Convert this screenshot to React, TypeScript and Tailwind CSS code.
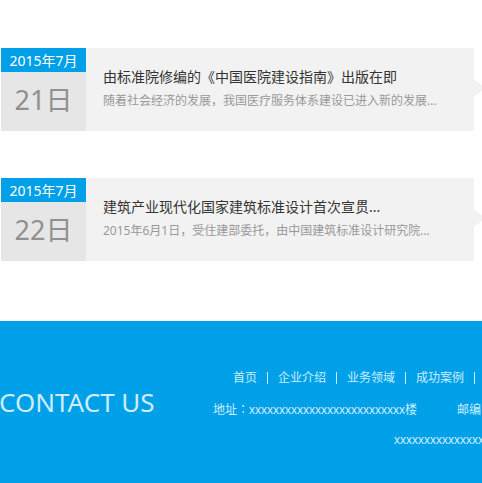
const sans = "font-['Noto_Sans','Noto_Sans_CJK_SC',sans-serif]";
const latin = "font-['Liberation_Sans','Noto_Sans_CJK_SC',sans-serif]";
const centredColon = "font-['Noto_Sans_CJK_JP',sans-serif]";

const news = [
  { month: '2015年7月', day: '21日', title: '由标准院修编的《中国医院建设指南》出版在即', text: '随着社会经济的发展，我国医疗服务体系建设已进入新的发展...' },
  { month: '2015年7月', day: '22日', title: '建筑产业现代化国家建筑标准设计首次宣贯...', text: '2015年6月1日，受住建部委托，由中国建筑标准设计研究院...' },
];

const links = ['首页', '企业介绍', '业务领域', '成功案例'];

export default function App() {
  return (
    <div className={`overflow-hidden bg-white ${sans}`}>
      <main className="flex flex-col gap-[47px] pt-12 pb-15 pl-px">
        {news.map((item) => (
          <article key={item.day} className="flex items-stretch">
            <time className="flex w-[85px] shrink-0 flex-col bg-[#e6e6e6] text-center">
              <span className="h-6 bg-[#00a0e9] text-sm leading-[26px] text-white">{item.month}</span>
              <span className="pb-[3px] text-[27px] leading-[56px] text-[#909090]">{item.day}</span>
            </time>
            <div className="min-w-0 flex-1 bg-[#f2f2f2] pt-[17px] pl-[17px] whitespace-nowrap">
              <h3 className="text-sm leading-6 text-[#333]">
                <a href="#">{item.title}</a>
              </h3>
              <p className="text-xs leading-6 text-[#999]">{item.text}</p>
            </div>
            <svg className="mt-8 h-4 w-2 shrink-0" viewBox="0 0 8 16" fill="#f2f2f2" aria-hidden="true">
              <path d="M0 0 8 5V11L0 16Z" />
            </svg>
          </article>
        ))}
      </main>
      <footer className="flex items-start bg-[#00a0e9] pb-5 whitespace-nowrap text-[#cceeff]">
        <h2 className="-ml-px w-[214px] shrink-0 pt-[63px] text-[26px] leading-9">CONTACT US</h2>
        <div className="shrink-0 pt-[41px] pb-[9px] text-xs">
          <nav className="flex h-8 items-center pl-5">
            {links.map((link) => (
              <span key={link} className="flex items-center">
                <a href="#">{link}</a>
                <i className="mx-[10px] h-3 w-px bg-current" />
              </span>
            ))}
          </nav>
          <p className={`flex h-8 items-baseline gap-10 leading-8 ${latin}`}>
            <span>地址<span className={`leading-none ${centredColon}`}>：</span>xxxxxxxxxxxxxxxxxxxxxxxxxx楼</span>
            <span>邮编</span>
          </p>
          <p className={`flex h-7 items-center pl-[181px] ${latin}`}>xxxxxxxxxxxxxxx</p>
        </div>
      </footer>
    </div>
  );
}
